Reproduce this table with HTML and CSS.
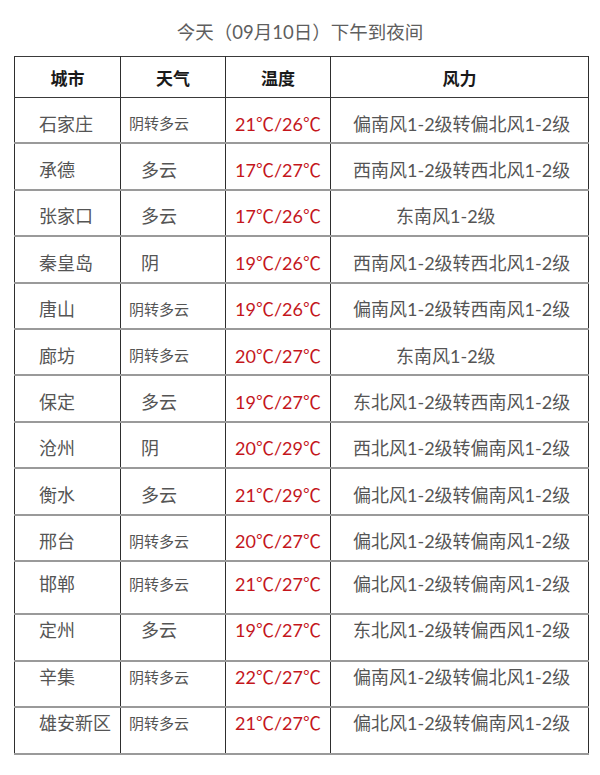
FILE: index.html
```html
<!DOCTYPE html>
<html lang="zh-CN">
<head>
<meta charset="utf-8">
<title>天气预报</title>
<link rel="stylesheet" href="styles.css">
</head>
<body>
<h1 class="title">今天（09月10日）下午到夜间</h1>
<table class="wx">
  <colgroup>
    <col class="c-city"><col class="c-sky"><col class="c-temp"><col class="c-wind">
  </colgroup>
  <thead>
    <tr class="head"><th>城市</th><th>天气</th><th>温度</th><th>风力</th></tr>
  </thead>
  <tbody>
    <tr><td class="city">石家庄</td><td class="sky small">阴转多云</td><td class="temp">21℃/26℃</td><td class="wind">偏南风1-2级转偏北风1-2级</td></tr>
    <tr><td class="city">承德</td><td class="sky">多云</td><td class="temp">17℃/27℃</td><td class="wind">西南风1-2级转西北风1-2级</td></tr>
    <tr><td class="city">张家口</td><td class="sky">多云</td><td class="temp">17℃/26℃</td><td class="wind short">东南风1-2级</td></tr>
    <tr><td class="city">秦皇岛</td><td class="sky">阴</td><td class="temp">19℃/26℃</td><td class="wind">西南风1-2级转西北风1-2级</td></tr>
    <tr><td class="city">唐山</td><td class="sky small">阴转多云</td><td class="temp">19℃/26℃</td><td class="wind">偏南风1-2级转西南风1-2级</td></tr>
    <tr><td class="city">廊坊</td><td class="sky small">阴转多云</td><td class="temp">20℃/27℃</td><td class="wind short">东南风1-2级</td></tr>
    <tr><td class="city">保定</td><td class="sky">多云</td><td class="temp">19℃/27℃</td><td class="wind">东北风1-2级转西南风1-2级</td></tr>
    <tr><td class="city">沧州</td><td class="sky">阴</td><td class="temp">20℃/29℃</td><td class="wind">西北风1-2级转偏南风1-2级</td></tr>
    <tr><td class="city">衡水</td><td class="sky">多云</td><td class="temp">21℃/29℃</td><td class="wind">偏北风1-2级转偏南风1-2级</td></tr>
    <tr><td class="city">邢台</td><td class="sky small">阴转多云</td><td class="temp">20℃/27℃</td><td class="wind">偏北风1-2级转偏南风1-2级</td></tr>
    <tr class="tall"><td class="city">邯郸</td><td class="sky small">阴转多云</td><td class="temp">21℃/27℃</td><td class="wind">偏北风1-2级转偏南风1-2级</td></tr>
    <tr class="top"><td class="city">定州</td><td class="sky">多云</td><td class="temp">19℃/27℃</td><td class="wind">东北风1-2级转偏西风1-2级</td></tr>
    <tr class="top"><td class="city">辛集</td><td class="sky small">阴转多云</td><td class="temp">22℃/27℃</td><td class="wind">偏南风1-2级转偏北风1-2级</td></tr>
    <tr class="top"><td class="city">雄安新区</td><td class="sky small">阴转多云</td><td class="temp">21℃/27℃</td><td class="wind">偏北风1-2级转偏南风1-2级</td></tr>
  </tbody>
</table>
</body>
</html>
```
FILE: styles.css
```css
html, body {
  margin: 0;
  padding: 0;
  background: #ffffff;
}
body {
  font-family: Lato, "Noto Sans CJK SC", sans-serif;
  color: #555555;
}
.title {
  margin: 20px 0 12px 0;
  height: 24px;
  line-height: 24px;
  font-size: 18.5px;
  font-weight: 400;
  text-align: center;
  color: #5e5e5e;
}
.wx {
  margin-left: 14px;
  width: 574px;
  table-layout: fixed;
  border-collapse: collapse;
}
.c-city { width: 106px; }
.c-sky { width: 105px; }
.c-temp { width: 105px; }
.c-wind { width: 258px; }
.wx th, .wx td {
  border-left: 1px solid #2e2e2e;
  border-right: 1px solid #2e2e2e;
  padding: 0;
  white-space: nowrap;
  overflow: hidden;
}
.head th {
  height: 40px;
  border-top: 1px solid #3a3a3a;
  border-bottom: 1px solid #3a3a3a;
  font-size: 17px;
  font-weight: 700;
  color: #1a1a1a;
  text-align: center;
  vertical-align: middle;
}
.wx td {
  height: 39.4px;
  padding-top: 5px;
  border-bottom: 2px solid #9a9a9a;
  font-size: 18px;
  vertical-align: middle;
}
.tall td {
  height: 41px;
  padding-top: 10px;
  vertical-align: top;
  line-height: 24px;
}
.top td {
  height: 41.7px;
  vertical-align: top;
  padding-top: 3px;
  line-height: 24px;
}
.city {
  text-align: left;
  padding-left: 24px !important;
  color: #555555;
}
.sky {
  text-align: left;
  padding-left: 20px !important;
  color: #555555;
}
.sky.small {
  font-size: 15px !important;
  padding-left: 8px !important;
}
.temp {
  text-align: center;
  color: #c4161c;
}
.wind {
  text-align: left;
  padding-left: 22px !important;
  color: #555555;
}
.wind.short {
  padding-left: 65px !important;
}
```
